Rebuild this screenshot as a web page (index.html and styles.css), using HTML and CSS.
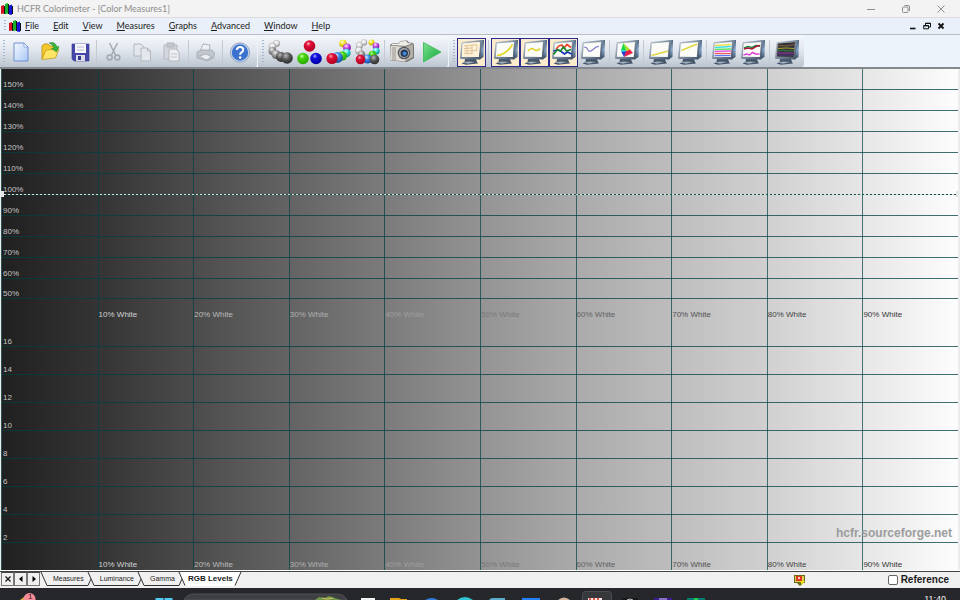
FILE: index.html
```html
<!DOCTYPE html>
<html lang="en">
<head>
<meta charset="utf-8">
<title>HCFR Colorimeter - [Color Measures1]</title>
<link rel="stylesheet" href="styles.css">
</head>
<body>
<svg class="defs" aria-hidden="true">
  <defs>
    <linearGradient id="bezel" x1="0" y1="0" x2="1" y2="1"><stop offset="0" stop-color="#c3cdd6"/><stop offset=".55" stop-color="#76879a"/><stop offset="1" stop-color="#3c4d62"/></linearGradient>
    <linearGradient id="side" x1="0" y1="0" x2="0" y2="1"><stop offset="0" stop-color="#4b6076"/><stop offset=".5" stop-color="#86a8cc"/><stop offset="1" stop-color="#35465c"/></linearGradient>
    <linearGradient id="paper" x1="0" y1="0" x2="1" y2="1"><stop offset="0" stop-color="#f4f9ff"/><stop offset="1" stop-color="#a9c8f6"/></linearGradient>
    <linearGradient id="go" x1="0" y1="0" x2="1" y2="1"><stop offset="0" stop-color="#7be08d"/><stop offset="1" stop-color="#12a838"/></linearGradient>
    <radialGradient id="gRed" cx=".4" cy=".3" r=".7"><stop offset="0" stop-color="#ffb0b8"/><stop offset=".3" stop-color="#e0103a"/><stop offset="1" stop-color="#b00020"/></radialGradient>
    <radialGradient id="gGreen" cx=".4" cy=".3" r=".7"><stop offset="0" stop-color="#d0ffc0"/><stop offset=".3" stop-color="#4cd810"/><stop offset="1" stop-color="#20a800"/></radialGradient>
    <radialGradient id="gBlue" cx=".4" cy=".3" r=".7"><stop offset="0" stop-color="#b0b0ff"/><stop offset=".3" stop-color="#1010e0"/><stop offset="1" stop-color="#0000a0"/></radialGradient>
    <radialGradient id="gSky" cx=".4" cy=".3" r=".7"><stop offset="0" stop-color="#d8ecff"/><stop offset=".4" stop-color="#3d8be8"/><stop offset="1" stop-color="#1350a8"/></radialGradient>
    <radialGradient id="gCyan" cx=".4" cy=".3" r=".7"><stop offset="0" stop-color="#e0ffff"/><stop offset=".5" stop-color="#30d8d8"/><stop offset="1" stop-color="#109090"/></radialGradient>
    <radialGradient id="gMag" cx=".4" cy=".3" r=".7"><stop offset="0" stop-color="#ffe0ff"/><stop offset=".5" stop-color="#c040e0"/><stop offset="1" stop-color="#7010a0"/></radialGradient>
    <radialGradient id="gYel" cx=".4" cy=".3" r=".7"><stop offset="0" stop-color="#ffffd8"/><stop offset=".5" stop-color="#f0e020"/><stop offset="1" stop-color="#b0a000"/></radialGradient>
    <radialGradient id="gDark" cx=".4" cy=".3" r=".7"><stop offset="0" stop-color="#b8b8b8"/><stop offset=".5" stop-color="#555"/><stop offset="1" stop-color="#2c2c2c"/></radialGradient>
    <radialGradient id="gMid" cx=".4" cy=".3" r=".7"><stop offset="0" stop-color="#f0f0f0"/><stop offset=".5" stop-color="#909090"/><stop offset="1" stop-color="#606060"/></radialGradient>
    <radialGradient id="gPale" cx=".4" cy=".3" r=".7"><stop offset="0" stop-color="#fff"/><stop offset=".6" stop-color="#d8d8d8"/><stop offset="1" stop-color="#888"/></radialGradient>
  </defs>
  <symbol id="logo" viewBox="0 0 12 12">
    <path d="M3 3h2v8H3zM7 1h1v10H7zM11 3h1v8h-1z" fill="#111"/>
    <path d="M0 3l3-1v8.500L0 11z" fill="#d81420"/><path d="M4 1l3-1v10.500L4 11z" fill="#18b028"/><path d="M8 2.500l3-1V12l-3-.5z" fill="#1414d8"/>
  </symbol>
  <symbol id="monitor" viewBox="0 0 25 26">
    <path d="M6 20h11l1 3 1 1.500-12 1.200-4.500-1.200 3-1.500z" fill="#46566a"/><path d="M4 23.500l5-1 7 .6-7 1.600z" fill="#9fadbc"/>
    <path d="M21 1.500L25 1 24.500 18l-4 2.500z" fill="url(#side)"/>
    <path d="M2.500 4Q2.500 3 4 2.900L22.500 1 23.500 1.400 21.300 20.500 2 20Q1 20 1 19z" fill="url(#bezel)"/>
    <path d="M3.800 4.500L21 3 19.800 18 2.800 17.700z" fill="#fbfbf8"/>
  </symbol>
</svg>

<header class="titlebar">
  <svg class="logo"><use href="#logo"/></svg>
  <h1>HCFR Colorimeter - [Color Measures1]</h1>
  <div class="winbtns">
    <button aria-label="Minimize"><svg viewBox="0 0 10 10"><path d="M1 5.500h8"/></svg></button>
    <button aria-label="Restore"><svg viewBox="0 0 10 10"><rect x="1.500" y="3" width="5.500" height="5.500" rx="1"/><path d="M3.500 1.500H7q1.500 0 1.500 1.500v4"/></svg></button>
    <button aria-label="Close"><svg viewBox="0 0 10 10"><path d="M1.500 1.500l7 7M8.500 1.500l-7 7"/></svg></button>
  </div>
</header>

<nav class="menubar">
  <span class="grip"></span>
  <svg class="logo"><use href="#logo"/></svg>
  <button><u>F</u>ile</button><button><u>E</u>dit</button><button><u>V</u>iew</button><button><u>M</u>easures</button><button><u>G</u>raphs</button><button><u>A</u>dvanced</button><button><u>W</u>indow</button><button><u>H</u>elp</button>
  <div class="mdibtns">
    <button aria-label="Minimize document"><svg viewBox="0 0 8 8"><path d="M1 6.500h5.500" stroke-width="1.600"/></svg></button>
    <button aria-label="Restore document"><svg viewBox="0 0 8 8"><path d="M2.500 3V1.200h5V5H6M2.200 1.500h5.500" /><path d="M.7 3.600h4.800v3.200H.7zM.5 3.800h5.200"/></svg></button>
    <button aria-label="Close document"><svg viewBox="0 0 8 8"><path d="M1.500 1.500l5 5M6.500 1.500l-5 5" stroke-width="1.800"/></svg></button>
  </div>
</nav>

<div class="toolbars">
  <div class="band" role="toolbar" aria-label="Standard">
    <span class="grip"></span>
    <button aria-label="New"><svg viewBox="0 0 25 26"><path d="M5 4h10l4 4v14H5z" fill="url(#paper)" stroke="#6f8fd0"/><path d="M15 4v4h4z" fill="#fff" stroke="#6f8fd0" stroke-width=".7"/></svg></button>
    <button aria-label="Open"><svg viewBox="0 0 25 26"><path d="M4 20V7l2-2h4l2 2h6v4" fill="#f3c92c" stroke="#b98d10" stroke-width=".8"/><path d="M4 20.500L8 11l13-1-3.500 9z" fill="#ffe565" stroke="#c39a1c" stroke-width=".8"/><path d="M11 4q6-2 8 4l2-.5-2.500 5.500-5-3.500 2.500-.5q-1-4-5-5z" fill="#35b43c" stroke="#187a24" stroke-width=".5"/></svg></button>
    <button aria-label="Save"><svg viewBox="0 0 25 26"><path d="M5 5h17v17H7l-2-2z" fill="#4548a8" stroke="#34378f" stroke-width=".6"/><path d="M8 5h11v9H8z" fill="#f6f6fb"/><path d="M10 8h7M10 11h7" stroke="#b8bcd0"/><path d="M9 16h9v6H9z" fill="#dcdde6"/><path d="M11 17h3v4h-3z" fill="#34378f"/></svg></button>
    <i class="sep"></i>
    <button aria-label="Cut"><svg viewBox="0 0 25 26" fill="none" stroke="#a3a8b0" stroke-width="1.500"><path d="M8.500 4l6 12M16.500 4l-6 12"/><circle cx="8.700" cy="18.500" r="2.500"/><circle cx="16.300" cy="18.500" r="2.500"/></svg></button>
    <button aria-label="Copy"><svg viewBox="0 0 25 26" fill="#e4e7ec" stroke="#b2b7bf"><path d="M4 5h7l3 3v9H4z"/><path d="M11 9h6.500l3 3v10H11z"/><path d="M17.500 9v3h3" fill="none"/></svg></button>
    <button aria-label="Paste"><svg viewBox="0 0 25 26" fill="#d3d7dd" stroke="#b2b7bf"><path d="M5 6h13v14H5z"/><path d="M8 4h7v4H8z" fill="#c3c8cf"/><path d="M10 10h7l3 3v9H10z" fill="#eceef1"/><path d="M12 15h6M12 18h6" stroke-width=".7"/></svg></button>
    <i class="sep"></i>
    <button aria-label="Print"><svg viewBox="0 0 25 26" stroke="#a5abb3" stroke-width=".9"><path d="M10 5l7 1-1 7H7z" fill="#eef0f3"/><path d="M4 13l4-2h11l2.500 3-1 5-6 3-10.500-3z" fill="#c2c7ce"/><path d="M6 17l7-2 6 3-6 3z" fill="#eceef1"/></svg></button>
    <i class="sep"></i>
    <button aria-label="Help"><svg viewBox="0 0 25 26"><circle cx="13" cy="13.500" r="9" fill="#3c72cf" stroke="#c9d5e8" stroke-width="1.600"/><circle cx="13" cy="13.500" r="9.700" fill="none" stroke="#6b84ab" stroke-width=".6"/><path d="M9.800 11q.2-3 3.300-3t3.200 2.700q0 1.600-1.800 2.600-1.400.8-1.400 2.400" fill="none" stroke="#fff" stroke-width="2"/><circle cx="13.100" cy="18.600" r="1.300" fill="#fff"/></svg></button>
  </div>

  <div class="band" role="toolbar" aria-label="Measures">
    <span class="grip"></span>
    <button aria-label="Gray scale"><svg viewBox="0 0 25 26"><circle cx="8.500" cy="4.500" r="3.300" fill="url(#gPale)" stroke="#999" stroke-width=".4"/><circle cx="4.500" cy="7.500" r="3.600" fill="url(#gPale)" stroke="#888" stroke-width=".4"/><circle cx="4.500" cy="12" r="4" fill="url(#gMid)"/><circle cx="8" cy="15.500" r="4.500" fill="url(#gMid)"/><circle cx="13" cy="18" r="5" fill="url(#gDark)"/><circle cx="19" cy="19" r="5.800" fill="url(#gDark)"/></svg></button>
    <button aria-label="Primaries"><svg viewBox="0 0 25 26"><circle cx="12.500" cy="7" r="5.800" fill="url(#gRed)"/><circle cx="6" cy="19.500" r="5.800" fill="url(#gGreen)"/><circle cx="19" cy="19.500" r="5.800" fill="url(#gBlue)"/></svg></button>
    <button aria-label="Primaries and secondaries"><svg viewBox="0 0 25 26"><circle cx="17" cy="4.500" r="3.800" fill="url(#gYel)"/><circle cx="21" cy="8.500" r="3.900" fill="url(#gMag)"/><circle cx="20.500" cy="14" r="4.200" fill="url(#gCyan)"/><circle cx="16.500" cy="17" r="4.500" fill="url(#gGreen)"/><circle cx="11.500" cy="18.500" r="5.400" fill="url(#gSky)"/><circle cx="6" cy="19.500" r="5.600" fill="url(#gRed)"/></svg></button>
    <button aria-label="Full measure"><svg viewBox="0 0 25 26"><circle cx="9" cy="3.500" r="3" fill="url(#gPale)" stroke="#aaa" stroke-width=".4"/><circle cx="16.500" cy="3.500" r="3" fill="url(#gYel)"/><circle cx="4.500" cy="6.500" r="3.300" fill="url(#gPale)" stroke="#999" stroke-width=".4"/><circle cx="21" cy="7" r="3.300" fill="url(#gMag)"/><circle cx="3.800" cy="11.500" r="3.500" fill="url(#gPale)" stroke="#888" stroke-width=".4"/><circle cx="21.200" cy="12" r="3.500" fill="url(#gCyan)"/><circle cx="6.500" cy="15.500" r="3.800" fill="url(#gMid)"/><circle cx="17.500" cy="16" r="4" fill="url(#gGreen)"/><circle cx="12.500" cy="20" r="4.600" fill="url(#gSky)"/><circle cx="19.500" cy="20.500" r="4.800" fill="url(#gDark)"/><circle cx="5.500" cy="20.500" r="4.800" fill="url(#gRed)"/></svg></button>
    <i class="sep"></i>
    <button aria-label="Snapshot"><svg viewBox="0 0 25 26"><path d="M1 6l3-2 6 .5 1-2.500 7-.5 2 2 4 .5 1 2v13l-7 4L2 21.500z" fill="#77736c"/><path d="M1.500 6.500L16 8v14.500L2 21z" fill="#dedbd5"/><path d="M16 8l8-3v13l-8 4.500z" fill="#b5b1aa"/><path d="M3 4.500l7 .5 1-2.500 6-.5 2 2 4 .5-7 2.500-13-1z" fill="#efede8"/><path d="M4 8v13M6 8v13" stroke="#8b8780" stroke-width=".8"/><circle cx="15" cy="14" r="6.300" fill="#54565a"/><circle cx="15" cy="14" r="5" fill="#a9adb3"/><circle cx="15.300" cy="14.300" r="3.700" fill="#27384e"/><circle cx="15.600" cy="14.500" r="2" fill="#3b8ae0"/></svg></button>
    <button aria-label="Run"><svg viewBox="0 0 25 26"><path d="M5.500 3.500L23 13 5.500 23z" fill="url(#go)" stroke="#4cc068"/></svg></button>
  </div>

  <div class="band" role="toolbar" aria-label="Views">
    <span class="grip"></span>
    <button class="on" aria-label="Measures"><svg viewBox="0 0 25 26"><use href="#monitor"/><path d="M3.800 4.500L21 3 19.800 18 2.800 17.700z" fill="#fdf1d8"/><path d="M5 7l13-1.300M5 9.500L13 9M5 12l13-.5M5 14.500l8-.2M8 6.500v9M13 6v9.500M18 6l-.5 6" stroke="#dcbf94" stroke-width=".9" fill="none"/></svg></button>
    <i class="sep"></i>
    <button class="on" aria-label="Luminance"><svg viewBox="0 0 25 26"><use href="#monitor"/><path d="M4 16.500Q13 16 19.500 5.500" stroke="#e2d818" stroke-width="1.500" fill="none"/></svg></button>
    <button class="on" aria-label="Gamma"><svg viewBox="0 0 25 26"><use href="#monitor"/><path d="M6 12q3-4 6-1.500t6-1" stroke="#e0d020" stroke-width="1.500" fill="none"/></svg></button>
    <button class="on" aria-label="RGB Levels"><svg viewBox="0 0 25 26"><use href="#monitor"/><g fill="none" stroke-width="1.700"><path d="M5 10l3-3 3-1 2 3 3-3.500 4 3" stroke="#e84828"/><path d="M2.500 12l4-1 3 1 4 3 3-2 4 2" stroke="#1830b8"/><path d="M2.500 15.500l4-5 3 1.500 3-4 3 4 4.500-1.500" stroke="#168a28"/></g></svg></button>
    <button aria-label="Color temperature"><svg viewBox="0 0 25 26"><use href="#monitor"/><path d="M4 8q3 0 4 3t5-.5 6-3" stroke="#8684ce" stroke-width="1.200" fill="none"/></svg></button>
    <i class="sep"></i>
    <button aria-label="CIE diagram"><svg viewBox="0 0 25 26"><use href="#monitor"/><path d="M9.500 4l-2.500 7 5.500 1z" fill="#18d848"/><path d="M9.500 4l3 8 4-1z" fill="#a8dc28"/><path d="M7 10.500l.5 3 5-1.500z" fill="#20d8d8"/><path d="M7.400 13l2.600 5 3-6z" fill="#2838d8"/><path d="M10 18l9-4-3-3.500-4 2z" fill="#e82048"/></svg></button>
    <i class="sep"></i>
    <button aria-label="Near black"><svg viewBox="0 0 25 26"><use href="#monitor"/><path d="M3.500 16.500L20 12" stroke="#e0d840" stroke-width="1.500"/></svg></button>
    <button aria-label="Near white"><svg viewBox="0 0 25 26"><use href="#monitor"/><path d="M4.500 11.500L20 5" stroke="#e0d840" stroke-width="1.500"/></svg></button>
    <i class="sep"></i>
    <button aria-label="Saturation"><svg viewBox="0 0 25 26"><use href="#monitor"/><g fill="none" stroke-width="1.300"><path d="M4 6.500l16-1" stroke="#e8e050"/><path d="M4 8.500l16-1" stroke="#40dce0"/><path d="M4 10.500l16-.5" stroke="#58e060"/><path d="M3.500 12.500l16.500-.5" stroke="#e858e0"/><path d="M3.500 14.500H20" stroke="#f06060"/><path d="M3.500 16.500h16" stroke="#6078e8"/></g></svg></button>
    <button aria-label="Color shifts"><svg viewBox="0 0 25 26"><use href="#monitor"/><g fill="none" stroke-width="1.500"><path d="M4 9l4-1.500 4 1 4-2 4 .5" stroke="#208840"/><path d="M4 10l4-1 4 1 4-2.500 4-1" stroke="#a81838"/><path d="M3.500 16l3-1 3 1 3-2.500 3 1.500 4 0" stroke="#e040d8"/></g></svg></button>
    <i class="sep"></i>
    <button aria-label="Combined"><svg viewBox="0 0 25 26"><use href="#monitor"/><path d="M3.800 4.500L21 3 19.800 18 2.800 17.700z" fill="#343438"/><g fill="none" stroke-width="1"><path d="M4 7l4-.5 5 .5 7-1.500" stroke="#806040"/><path d="M4 9.500l8-.5 8 .5" stroke="#a8a028"/><path d="M4 12l4-1 4 1 8-.5" stroke="#28803c"/><path d="M3.500 14h16" stroke="#9838b0"/><path d="M3.500 16h16" stroke="#503080"/></g></svg></button>
  </div>
</div>

<main class="chart" aria-label="RGB Levels chart">
  <div class="plot">
    <section class="panel">
      <div class="rows percent">
        <span>150%</span><span>140%</span><span>130%</span><span>120%</span><span>110%</span><span class="target">100%</span><span>90%</span><span>80%</span><span>70%</span><span>60%</span><span>50%</span><span class="last"></span>
      </div>
      <div class="cols">
        <span></span><span class="c1">10% White</span><span class="c2">20% White</span><span class="c3">30% White</span><span class="c4">40% White</span><span class="c5">50% White</span><span class="c6">60% White</span><span class="c7">70% White</span><span class="c8">80% White</span><span class="c9">90% White</span>
      </div>
    </section>
    <section class="panel">
      <div class="rows delta">
        <span>16</span><span>14</span><span>12</span><span>10</span><span>8</span><span>6</span><span>4</span><span>2</span><span class="last"></span>
      </div>
      <div class="cols">
        <span></span><span class="c1">10% White</span><span class="c2">20% White</span><span class="c3">30% White</span><span class="c4">40% White</span><span class="c5">50% White</span><span class="c6">60% White</span><span class="c7">70% White</span><span class="c8">80% White</span><span class="c9">90% White</span>
      </div>
      <p class="watermark">hcfr.sourceforge.net</p>
    </section>
  </div>
</main>

<footer class="tabstrip">
  <div class="tabnav">
    <button aria-label="Close view"><svg viewBox="0 0 8 8"><path d="M1.500 1.500l5 5M6.500 1.500l-5 5" stroke="#111" stroke-width="1.200"/></svg></button>
    <button aria-label="Previous tab"><svg viewBox="0 0 8 8"><path d="M5.500 1v6L2 4z"/></svg></button>
    <button aria-label="Next tab"><svg viewBox="0 0 8 8"><path d="M2.500 1v6L6 4z"/></svg></button>
  </div>
  <svg class="slant" viewBox="0 0 10 14"><path d="M1 0l6 13.500h3"/></svg>
  <button class="tab">Measures</button>
  <svg class="slant" viewBox="0 0 10 14"><path d="M0 13.500h1L4 7M1 0l6 13.500h3"/></svg>
  <button class="tab">Luminance</button>
  <svg class="slant" viewBox="0 0 10 14"><path d="M0 13.500h1L4 7M1 0l6 13.500h3"/></svg>
  <button class="tab">Gamma</button>
  <svg class="slant" viewBox="0 0 10 14"><path class="fill" d="M1 0h9v14H7z"/><path d="M0 13.500h1L4 7M1 0l6 13.500"/></svg>
  <button class="tab active">RGB Levels</button>
  <svg class="slant" viewBox="0 0 10 14"><path class="fill" d="M0 0h8L2 14H0z"/><path d="M2 13.500L8 0"/></svg>
  <svg class="status" viewBox="0 0 12 12"><path d="M0 1h11v8H9l-3 3-3-3H0z" fill="#6d6a16"/><path d="M1 2h9v6H1z" fill="#d8cf50"/><path d="M2 2h6v5H2z" fill="#e4361e"/><path d="M4 3h2v2H4z" fill="#ffd0b8"/><path d="M6 7h5l-3 4z" fill="#f0e020"/></svg>
  <label class="reference"><input type="checkbox"> Reference</label>
</footer>

<div class="taskbar">
  <svg viewBox="0 0 720 12" aria-hidden="true">
    <path d="M20 12l4-3 6 3z" fill="#e5b23c"/><circle cx="29.500" cy="11" r="6" fill="#f58d98"/>
    <path d="M155.500 10h8v2h-8zM164.500 10h8v2h-8z" fill="#50cbf5"/>
    <path d="M184 12q3-6 10-6h143q7 0 10 6z" fill="#3e3f42" stroke="#5a5b5e" stroke-width=".7"/>
    <path d="M315 12l4-3 5 1 5-2 6 2 6 2z" fill="#70964a"/><path d="M322 10l5 1 6-1" stroke="#d8c060" fill="none"/>
    <path d="M361 10h14v2h-14z" fill="#f1f1f1"/><path d="M390 10h9l2 1h6v1h-17z" fill="#e2a21a"/>
    <path d="M425 12q7-4 13 0z" fill="#2c7edc"/><path d="M457 12q8-6 16 0z" fill="#30c6d6"/>
    <path d="M489 12q1-2 4-2h12v2z" fill="#5aaecb"/><path d="M522 10h18v2h-18z" fill="#2480f6"/>
    <path d="M558 12q6-5 12 0z" fill="#d6b49b"/><rect x="582.500" y="3.500" width="29" height="12" rx="3" fill="#37383b" stroke="#4b4c4f"/>
    <path d="M588 10h14v2h-14z" fill="#f7e3df"/><path d="M589 11h2M593 11h2M597 11h2" stroke="#d92a1c" stroke-width="1.500"/>
    <path d="M622 10h16v2h-16z" fill="#17181a"/><path d="M627 12q3-2 6 0" stroke="#ccc" fill="none"/>
    <path d="M654 10h18v2h-18z" fill="#3b1a92"/><path d="M659 11h8" stroke="#d0c8f0"/>
    <path d="M687 10h18v2h-18z" fill="#0b7a72"/><path d="M694 10h4v2h-4z" fill="#24d048"/>
  </svg>
  <span class="badge">1</span>
  <time>11:40</time>
</div>
</body>
</html>
```
FILE: styles.css
```css
* { box-sizing: border-box; }

body {
  margin: 0;
  height: 100vh;
  display: flex;
  flex-direction: column;
  overflow: hidden;
  background: #f0f0f0;
  color: #1b1b1b;
  font-family: "Liberation Sans", Arial, sans-serif;
  font-size: 8px;
}

button {
  margin: 0;
  padding: 0;
  border: 0;
  background: none;
  color: inherit;
  font: inherit;
}

.defs { position: absolute; width: 0; height: 0; }

.logo { width: 12px; height: 12px; flex: none; }

/* Title bar */
.titlebar {
  display: flex;
  align-items: center;
  flex: none;
  height: 18px;
  padding: 0 14px 0 1px;
  background: #f3f3f3;
  border-bottom: 1px solid #dcdcdc;
}
.titlebar h1 {
  margin: 0 0 0 4px;
  font: 400 9px/16px "Lato", "Open Sans", sans-serif;
  color: #8d8d8d;
}
.winbtns { display: flex; gap: 25px; margin-left: auto; }
.winbtns svg { display: block; width: 10px; height: 10px; fill: none; stroke: #8f8f8f; stroke-width: 1; }

/* Menu bar */
.menubar {
  display: flex;
  align-items: center;
  flex: none;
  height: 17px;
  padding: 0 15px 0 4px;
  background: #e9f0f9;
  border-bottom: 1px solid #b9bcc0;
  font: 400 9px/16px "Lato", "Open Sans", sans-serif;
}
.menubar .logo { margin: 0 4px 0 3px; }
.menubar > button { margin-right: 14px; }
.mdibtns { display: flex; gap: 6px; margin-left: auto; }
.mdibtns svg { display: block; width: 8px; height: 8px; fill: none; stroke: #111; stroke-width: 1; }

.grip {
  flex: none;
  width: 2px;
  height: 12px;
  background: repeating-linear-gradient(#a3b6cf 0 1px, transparent 1px 3px);
}

/* Toolbars */
.toolbars {
  display: flex;
  flex: none;
  height: 34px;
  gap: 1px;
  background: #edf3fa;
  border-bottom: 2px solid #85888c;
}
.band {
  display: flex;
  align-items: center;
  padding: 2px 3px 0 3px;
  border-radius: 0 3px 3px 0;
  background: linear-gradient(#f5f8fc, #e0e5ed 50%, #bcc5d0);
}
.band .grip { height: 24px; margin-right: 2px; }
.band button {
  display: grid;
  place-items: center;
  width: 29px;
  height: 29px;
}
.band button.on { background: #fdeccb; border: 1px solid #29298e; }
.band svg { width: 25px; height: 26px; }
.sep {
  width: 1px;
  height: 24px;
  margin: 0 2px;
  background: #f7f9fb;
  border-left: 1px solid #c3cad3;
}
.band + .band { padding-left: 4px; }

/* Chart */
.chart {
  display: flex;
  flex: 1;
  min-height: 0;
  padding: 0 2px 0 1px;
  background: #ececec;
}
.plot {
  flex: 1;
  display: flex;
  flex-direction: column;
  border-left: 1px solid #2b5453;
  background: linear-gradient(90deg, #202020, #343434 10%, #4c4c4c 20%, #636363 30%, #7b7b7b 40%, #939393 50%, #aaa 60%, #bdbdbd 70%, #d0d0d0 80%, #e6e6e6 90%, #fdfdfd);
}
.panel { flex: 1; min-height: 0; display: grid; }
.rows, .cols, .watermark { grid-area: 1 / 1; }
.rows { display: flex; flex-direction: column; color: #c4c4c4; }
.rows span {
  flex: 1 1 0;
  min-height: 0;
  display: flex;
  align-items: flex-end;
  padding-left: 1px;
  line-height: 8px;
  border-bottom: 1px solid rgba(0, 64, 64, .75);
}
.rows .last { border-bottom: 0; }
.rows .target {
  position: relative;
  border-bottom: 0;
  padding-bottom: 1px;
  background: repeating-linear-gradient(90deg, #165250 0 2px, #d5dddd 2px 4px) bottom / 100% 1px no-repeat;
}
.target::before, .target::after {
  content: "";
  position: absolute;
  bottom: -2px;
  width: 3px;
  height: 6px;
  background: #e6e6e6;
}
.target::before { left: -1px; }
.target::after { right: -1px; }

.cols { display: grid; grid-template-columns: repeat(10, 1fr); }
.cols span {
  display: flex;
  align-items: flex-end;
  padding: 0;
  line-height: 10px;
  white-space: nowrap;
  border-left: 1px solid rgba(0, 64, 64, .7);
}
.cols span:first-child { border-left: 0; }
.cols .c1 { color: #d2d2d2; }
.cols .c2 { color: #bdbdbd; }
.cols .c3 { color: #b2b2b2; }
.cols .c4 { color: #9f9f9f; }
.cols .c5 { color: #797979; }
.cols .c6 { color: #626262; }
.cols .c7 { color: #505050; }
.cols .c8 { color: #444; }
.cols .c9 { color: #363636; }

.watermark {
  align-self: end;
  justify-self: end;
  margin: 0 6px 29px 0;
  font: 700 12px/16px "Liberation Sans", Arial, sans-serif;
  color: #9d9d9d;
}

/* View tabs */
.tabstrip {
  display: flex;
  align-items: flex-end;
  flex: none;
  height: 18px;
  padding: 0 11px 2px 1px;
  background: #f0f0f0;
  border-top: 1px solid #fff;
  box-shadow: inset 0 1px #444;
}
.tabnav { display: flex; }
.tabnav button {
  display: grid;
  place-items: center;
  width: 13px;
  height: 14px;
  border: 1px solid #777;
  border-top-color: #444;
}
.tabnav svg { width: 8px; height: 8px; }
.slant { width: 10px; height: 14px; fill: none; stroke: #333; stroke-width: 1; }
.slant .fill { fill: #fff; stroke: none; }
.tab {
  height: 14px;
  padding: 0 3px;
  border-bottom: 1px solid #333;
  font-size: 7px;
  line-height: 12px;
}
.tab.active { padding: 0; border-bottom-color: #fff; background: #fff; font-size: 8px; font-weight: 700; }
.status { width: 12px; height: 12px; margin: 0 82px 0 auto; }
.reference {
  display: flex;
  align-items: center;
  gap: 3px;
  font-size: 10px;
  font-weight: 700;
  line-height: 12px;
}
.reference input {
  appearance: none;
  width: 10px;
  height: 10px;
  margin: 0;
  border: 1px solid #666;
  border-radius: 2px;
  background: #fff;
}

/* Desktop taskbar */
.taskbar {
  position: relative;
  display: flex;
  flex: none;
  height: 12px;
  overflow: hidden;
  background: #26272a;
}
.taskbar svg { width: 720px; height: 12px; flex: none; }
.badge { position: absolute; left: 28px; top: 5px; font-size: 8px; line-height: 8px; color: #3a1a1e; }
.taskbar time { margin: 6px 14px 0 auto; font-size: 9px; line-height: 10px; color: #f2f2f2; }
```
